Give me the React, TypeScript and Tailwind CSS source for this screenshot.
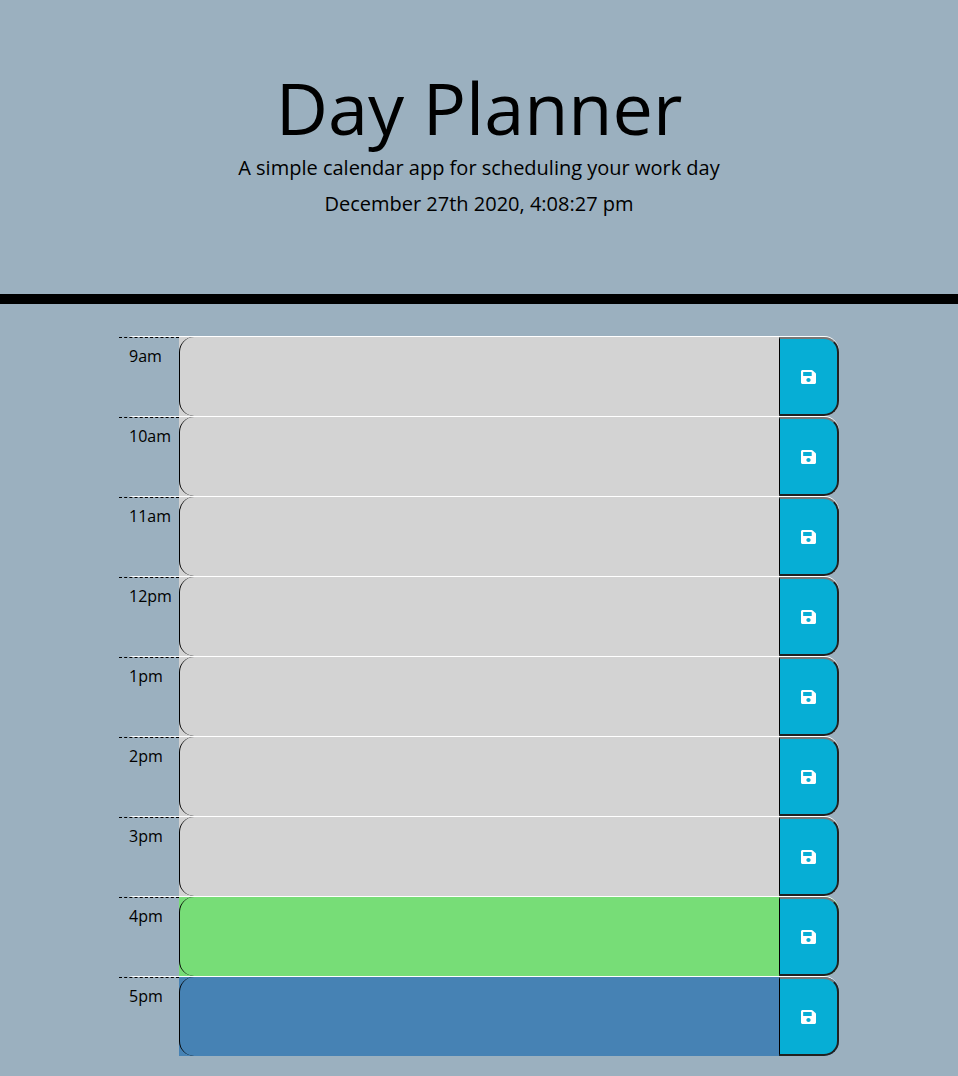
import { FaSave } from "react-icons/fa";

type Block = { hour: string; tone: string };

const past = "bg-[#d3d3d3]";
const present = "bg-[#77dd77]";
const future = "bg-[#4682b4]";

const blocks: Block[] = [
  { hour: "9am", tone: past },
  { hour: "10am", tone: past },
  { hour: "11am", tone: past },
  { hour: "12pm", tone: past },
  { hour: "1pm", tone: past },
  { hour: "2pm", tone: past },
  { hour: "3pm", tone: past },
  { hour: "4pm", tone: present },
  { hour: "5pm", tone: future },
];

function TimeBlock({ hour, tone }: Block) {
  return (
    <div className={`flex h-20 rounded-[15px] border-t border-white ${tone}`}>
      <div className="w-[60px] border-t border-dashed border-black bg-[#9bb0bf] pt-[6px] pl-[10px] text-base leading-6">
        {hour}
      </div>
      <textarea
        aria-label={hour}
        className={`h-[79px] w-[600px] resize-none ${tone} bg-clip-content p-0 outline-none rounded-l-[15px] border-l border-black`}
      />
      <button
        aria-label={`Save ${hour}`}
        className="flex w-[60px] items-center justify-center rounded-r-[15px] border-2 border-l border-t-[#767676] border-r-[#212121] border-b-[#212121] border-l-black bg-[#06aed5] text-base text-white"
      >
        <FaSave preserveAspectRatio="none" className="h-4 w-[15px]" />
      </button>
    </div>
  );
}

export default function App() {
  return (
    <div className="min-h-[1076px] bg-[#9bb0bf] font-['Open_Sans',sans-serif] text-black">
      <header className="h-[304px] border-b-[10px] border-black pt-16 text-center">
        <h1 className="text-[72px] leading-[86px] font-normal">Day Planner</h1>
        <p className="text-xl leading-[30px] pt-[3px]">A simple calendar app for scheduling your work day</p>
        <p className="pt-[6px] text-xl leading-[30px]">December 27th 2020, 4:08:27 pm</p>
      </header>
      <main className="mx-auto w-[720px] pt-8">
        {blocks.map((b) => (
          <TimeBlock key={b.hour} {...b} />
        ))}
      </main>
    </div>
  );
}
